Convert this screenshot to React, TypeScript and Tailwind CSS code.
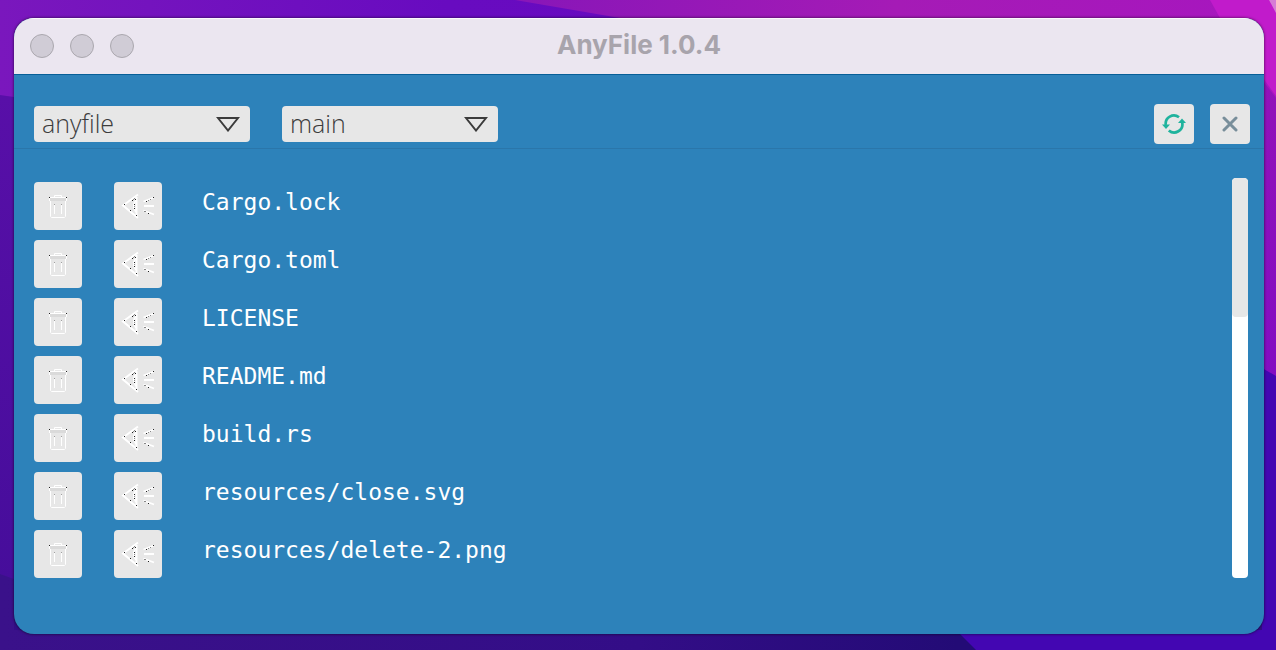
import { useState } from "react";

const files = [
  "Cargo.lock",
  "Cargo.toml",
  "LICENSE",
  "README.md",
  "build.rs",
  "resources/close.svg",
  "resources/delete-2.png",
];

function Wallpaper() {
  return (
    <svg
      className="absolute inset-0 h-full w-full"
      viewBox="0 0 1276 650"
      preserveAspectRatio="none"
      aria-hidden="true"
    >
      <defs>
        <linearGradient id="topLeft" x1="0" x2="1" y1="0" y2="0">
          <stop offset="0" stopColor="#7a17bd" />
          <stop offset="0.35" stopColor="#680bc0" />
          <stop offset="1" stopColor="#6409bd" />
        </linearGradient>
        <linearGradient id="topRight" x1="0" x2="1" y1="0" y2="0">
          <stop offset="0" stopColor="#8816b8" />
          <stop offset="0.5" stopColor="#a51bb6" />
          <stop offset="1" stopColor="#a716bf" />
        </linearGradient>
        <linearGradient id="left" x1="0" x2="0" y1="0" y2="1">
          <stop offset="0" stopColor="#580fa8" />
          <stop offset="1" stopColor="#460d9b" />
        </linearGradient>
        <linearGradient id="right" x1="0" x2="0" y1="0" y2="1">
          <stop offset="0" stopColor="#9412b8" />
          <stop offset="1" stopColor="#7d0bc5" />
        </linearGradient>
        <linearGradient id="bottom" x1="0" x2="1" y1="0" y2="0">
          <stop offset="0" stopColor="#3a118a" />
          <stop offset="0.5" stopColor="#330d87" />
          <stop offset="0.75" stopColor="#230b76" />
        </linearGradient>
      </defs>
      <path d="M0 0H1276V120H0Z" fill="url(#topLeft)" />
      <path d="M515 0H1276V120H900L620 18Z" fill="url(#topRight)" />
      <path d="M1210 0H1276V96L1220 18Z" fill="#c11bcb" />
      <path d="M1269 0H1276V13Z" fill="#d67bd6" />
      <path d="M0 95L14 97V580H0Z" fill="url(#left)" />
      <path d="M1240 50L1276 98V480H1240Z" fill="url(#right)" />
      <path d="M0 574L14 579V630H1276V650H0Z" fill="url(#bottom)" />
      <path d="M956 630L976 650H1276V376L1262 368V630Z" fill="#4306b2" />
    </svg>
  );
}

function Dropdown({ label, options }: { label: string; options: string[] }) {
  return (
    <div className="relative w-[216px]">
      <select
        aria-label={label}
        className="block h-9 w-full appearance-none rounded bg-[#e7e7e7] pr-10 pb-0.5 pl-2 font-['Open_Sans','Noto_Sans',sans-serif] text-[25px] leading-[34px] font-light text-[#3c3c3c]"
      >
        {options.map((option) => (
          <option key={option}>{option}</option>
        ))}
      </select>
      <svg
        className="pointer-events-none absolute top-2.5 right-2.5 h-4 w-6"
        viewBox="0 0 24 16"
        fill="none"
        stroke="#3c3c3c"
        strokeWidth="2"
        aria-hidden="true"
      >
        <path d="M2 2H22L12 14.5Z" />
      </svg>
    </div>
  );
}

function RefreshIcon() {
  return (
    <svg width="24" height="22" viewBox="0 0 24 22" fill="none" aria-hidden="true">
      <g stroke="#1fb39d" strokeWidth="2.7">
        <path d="M3.8 12A8.2 8.2 0 0 1 17 4.3" />
        <path d="M20.2 9.5A8.2 8.2 0 0 1 6.8 17.4" />
      </g>
      <path d="M0 11.5H8L4 16Z" fill="#1fb39d" />
      <path d="M16 10H24L20 5.5Z" fill="#1fb39d" />
    </svg>
  );
}

function CloseIcon() {
  return (
    <svg width="16" height="16" viewBox="0 0 16 16" aria-hidden="true">
      <path d="M2 2L14 14M14 2L2 14" stroke="#788e9a" strokeWidth="3" strokeLinecap="round" />
    </svg>
  );
}

function TrashIcon() {
  return (
    <svg width="48" height="48" viewBox="0 0 48 48" fill="none" aria-hidden="true">
      <path d="M16 16H32V19H16Z" fill="#dadada" />
      <g stroke="#fff">
        <path d="M20.5 15V13.5H27.5V15" />
        <path d="M15.5 19V15.5H32.5V19" />
        <path d="M16.5 19V34.5L17.5 35.5H30.5L31.5 34.5V19" />
        <path d="M20.5 22V32M27.5 22V32" />
      </g>
      <path d="M15 15H16V16H15ZM32 15H33V16H32Z" fill="#222" />
      <path d="M20 22H21V23H20ZM27 22H28V23H27Z" fill="#a0a0a0" />
    </svg>
  );
}

function EyeIcon() {
  return (
    <svg width="48" height="48" viewBox="0 0 48 48" fill="none" aria-hidden="true">
      <g stroke="#fff">
        <path d="M24 12.5L9 23.5L24 36" strokeWidth="2" />
        <path d="M22.5 15V34" strokeWidth="2" />
        <path d="M22 18Q17.5 24 22 30" strokeWidth="1.6" />
        <path d="M29.5 19.5L40 15.5M30 24H40M29.5 28.5L40 32.5" strokeWidth="1.8" />
      </g>
      <path
        d="M10 22h1v1h-1zM16 28h1v1h-1zM20 22h1v1h-1zM20 26h1v1h-1zM21 17h1v1h-1zM22 33h1v1h-1zM32 19h1v1h-1zM39 15h1v1h-1zM34 31h1v1h-1zM18 18h1v1h-1z"
        fill="#222"
      />
      <path
        d="M19 17h1v1h-1zM20 16h1v1h-1zM20 24h1v1h-1zM30 29h1v1h-1zM31 29h1v1h-1zM34 18h1v1h-1zM36 17h1v1h-1z"
        fill="#888"
      />
    </svg>
  );
}

export default function App() {
  const [items, setItems] = useState(files);
  const toolButton = "flex h-10 w-10 items-center justify-center rounded bg-[#e7e7e7]";
  const rowButton = "flex h-12 w-12 shrink-0 items-center justify-center rounded bg-[#e7e7e7]";

  return (
    <div className="relative flex min-h-screen flex-col overflow-hidden bg-[#330d87] pt-[18px] pr-3 pb-4 pl-3.5">
      <Wallpaper />
      <main className="relative flex flex-1 flex-col overflow-hidden rounded-[20px] bg-[#2d82ba] shadow-[0_0_3px_rgba(0,0,0,0.7)]">
        <header className="grid h-[57px] grid-cols-3 items-center border-b border-[#075f98] bg-[#ebe6f0] px-4 shadow-[inset_0_1px_0_#faf8fc]">
          <div className="flex gap-4">
            <button aria-label="Close window" className="h-6 w-6 rounded-full border border-[#aaa7ae] bg-[#d0ccd6]" />
            <button aria-label="Minimize window" className="h-6 w-6 rounded-full border border-[#aaa7ae] bg-[#d0ccd6]" />
            <button aria-label="Zoom window" className="h-6 w-6 rounded-full border border-[#aaa7ae] bg-[#d0ccd6]" />
          </div>
          <h1 className="pb-0.5 text-center font-[Inter,sans-serif] text-[26px] leading-8 font-bold whitespace-nowrap text-[#a8a4ac]">
            AnyFile 1.0.4
          </h1>
        </header>

        <div className="flex items-center justify-between border-b border-[#2a76aa] pt-[29px] pr-3.5 pb-1 pl-5">
          <div className="flex gap-8">
            <Dropdown label="Repository" options={["anyfile"]} />
            <Dropdown label="Branch" options={["main"]} />
          </div>
          <div className="flex gap-4">
            <button aria-label="Refresh" className={toolButton} onClick={() => setItems(files)}>
              <RefreshIcon />
            </button>
            <button aria-label="Close" className={toolButton}>
              <CloseIcon />
            </button>
          </div>
        </div>

        <section className="flex justify-between pt-[29px] pr-4 pb-14 pl-5">
          <ul className="flex flex-col gap-2.5 pt-1">
            {items.map((name) => (
              <li key={name} className="flex items-center">
                <button
                  aria-label={`Delete ${name}`}
                  className={rowButton}
                  onClick={() => setItems(items.filter((item) => item !== name))}
                >
                  <TrashIcon />
                </button>
                <button aria-label={`View ${name}`} className={`${rowButton} ml-8`}>
                  <EyeIcon />
                </button>
                <span className="ml-10 pb-2 font-['DejaVu_Sans_Mono',monospace] text-[23px] leading-8 text-white">
                  {name}
                </span>
              </li>
            ))}
          </ul>
          <div className="w-4 overflow-hidden rounded bg-white">
            <div className="h-[139px] rounded bg-[#e7e7e7]" />
          </div>
        </section>
      </main>
    </div>
  );
}
